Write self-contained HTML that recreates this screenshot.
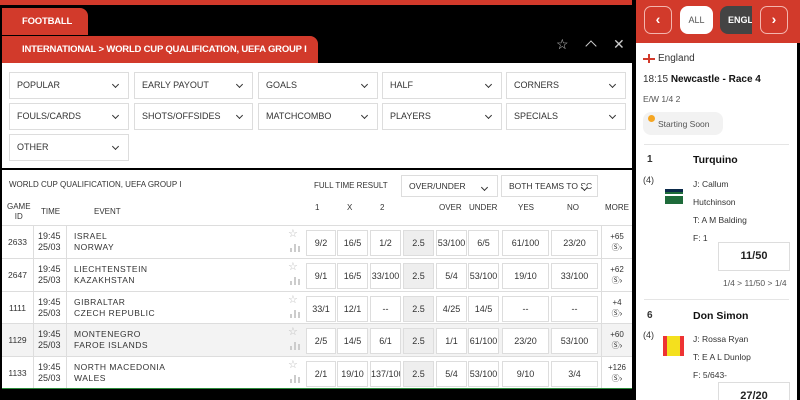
<!DOCTYPE html>
<html style="overflow:hidden;height:400px"><head><style>
*{margin:0;padding:0;box-sizing:border-box}
body{width:800px;height:400px;background:#000;font-family:"Liberation Sans",sans-serif;position:relative;overflow:hidden;color:#222}
.a{position:absolute}
.red{background:#d23a2b}
.tab{color:#fff;font-weight:bold;font-size:9.5px;padding-left:20px;line-height:27px;border-radius:0 8px 0 0;white-space:nowrap;letter-spacing:-0.2px}
.f{position:absolute;border:1px solid #ddd;background:#fff;font-size:9px;color:#333;padding-left:7px;line-height:25px;height:27px;white-space:nowrap;overflow:hidden}
.f:after{content:"";position:absolute;right:10px;top:9px;width:4px;height:4px;border-right:1px solid #333;border-bottom:1px solid #333;transform:rotate(45deg);background:#fff}
.t{font-size:8px;color:#333;position:absolute;white-space:nowrap}
.row{position:absolute;left:2px;width:630px;border-top:1px solid #ddd}
.b{position:absolute;border:1px solid #ddd;background:#fff;font-size:9px;text-align:center;line-height:24px;height:26px;top:4px;color:#333;white-space:nowrap;overflow:hidden}
.g{background:#eee}
.c{position:absolute;font-size:8.5px;color:#333;white-space:nowrap}
.r{font-size:9px;color:#333;position:absolute;white-space:nowrap}
</style></head><body>
<div class="a red" style="left:0;top:0;width:632px;height:5px"></div>
<div class="a red tab" style="left:2px;top:8px;width:86px;height:27px">FOOTBALL</div>
<div class="a red tab" style="left:2px;top:36px;width:316px;height:27px">INTERNATIONAL &gt; WORLD CUP QUALIFICATION, UEFA GROUP I</div>
<div class="a" style="left:556px;top:36px;color:#ccc;font-size:14px">☆</div>
<div class="a" style="left:587px;top:42px;width:8px;height:8px;border-left:1.5px solid #ccc;border-top:1.5px solid #ccc;transform:rotate(45deg)"></div>
<div class="a" style="left:613px;top:36px;color:#ccc;font-size:14px">✕</div>
<div class="a" style="left:2px;top:63px;width:630px;height:105px;background:#fff"></div>
<div class="f" style="left:9px;top:72px;width:120px">POPULAR</div>
<div class="f" style="left:134px;top:72px;width:119px">EARLY PAYOUT</div>
<div class="f" style="left:258px;top:72px;width:120px">GOALS</div>
<div class="f" style="left:382px;top:72px;width:120px">HALF</div>
<div class="f" style="left:506px;top:72px;width:120px">CORNERS</div>
<div class="f" style="left:9px;top:103px;width:120px">FOULS/CARDS</div>
<div class="f" style="left:134px;top:103px;width:119px">SHOTS/OFFSIDES</div>
<div class="f" style="left:258px;top:103px;width:120px">MATCHCOMBO</div>
<div class="f" style="left:382px;top:103px;width:120px">PLAYERS</div>
<div class="f" style="left:506px;top:103px;width:120px">SPECIALS</div>
<div class="f" style="left:9px;top:134px;width:120px">OTHER</div>
<div class="a" style="left:2px;top:170px;width:630px;height:218px;background:#fff"></div>
<div class="a" style="left:2px;top:387px;width:630px;height:2px;background:#2a8a3a"></div>
<div class="t" style="left:9px;top:180px">WORLD CUP QUALIFICATION, UEFA GROUP I</div>
<div class="t" style="left:314px;top:181px">FULL TIME RESULT</div>
<div class="f" style="left:401px;top:175px;width:97px;height:22px;line-height:20px;font-size:8.5px">OVER/UNDER</div>
<div class="f" style="left:501px;top:175px;width:97px;height:22px;line-height:20px;font-size:8.5px">BOTH TEAMS TO SC</div>
<div class="t" style="left:7px;top:202px;text-align:center;line-height:10px">GAME<br>ID</div>
<div class="t" style="left:41px;top:207px">TIME</div>
<div class="t" style="left:94px;top:207px">EVENT</div>
<div class="t" style="left:315px;top:203px">1</div>
<div class="t" style="left:347px;top:203px">X</div>
<div class="t" style="left:380px;top:203px">2</div>
<div class="t" style="left:439px;top:203px">OVER</div>
<div class="t" style="left:469px;top:203px">UNDER</div>
<div class="t" style="left:518px;top:203px">YES</div>
<div class="t" style="left:567px;top:203px">NO</div>
<div class="t" style="left:605px;top:203px">MORE</div>
<div id="rows"></div>
<script>
var d=[["2633","ISRAEL","NORWAY","9/2","16/5","1/2","53/100","6/5","61/100","23/20","+65"],
["2647","LIECHTENSTEIN","KAZAKHSTAN","9/1","16/5","33/100","5/4","53/100","19/10","33/100","+62"],
["1111","GIBRALTAR","CZECH REPUBLIC","33/1","12/1","--","4/25","14/5","--","--","+4"],
["1129","MONTENEGRO","FAROE ISLANDS","2/5","14/5","6/1","1/1","61/100","23/20","53/100","+60"],
["1133","NORTH MACEDONIA","WALES","2/1","19/10","137/100","5/4","53/100","9/10","3/4","+126"]];
var tops=[225,258,291,323,356],h="";
d.forEach(function(r,i){
var bg=i==3?"#f3f3f3":"#fff";
h+='<div class="row" style="top:'+tops[i]+'px;height:'+(i==4?32:33)+'px;background:'+bg+'">'+
'<div class="c" style="left:0;width:31px;text-align:center;top:11px">'+r[0]+'</div>'+
'<div style="position:absolute;left:31px;top:0;bottom:0;border-left:1px solid #ddd"></div>'+
'<div class="c" style="left:36px;top:5px;line-height:11px;font-size:9px">19:45<br>25/03</div>'+
'<div style="position:absolute;left:64px;top:0;bottom:0;border-left:1px solid #ddd"></div>'+
'<div class="c" style="left:72px;top:5px;line-height:11px;letter-spacing:.5px">'+r[1]+'<br>'+r[2]+'</div>'+
'<div class="c" style="left:286px;top:1px;color:#bbb;font-size:11px">☆</div>'+
'<div style="position:absolute;left:288px;top:22px;width:2px;height:4px;background:#ccc"></div><div style="position:absolute;left:292px;top:18px;width:2px;height:8px;background:#ccc"></div><div style="position:absolute;left:296px;top:20px;width:2px;height:6px;background:#ccc"></div>'+
'<div class="b" style="left:304px;width:30px">'+r[3]+'</div>'+
'<div class="b" style="left:335px;width:31px">'+r[4]+'</div>'+
'<div class="b" style="left:368px;width:31px">'+r[5]+'</div>'+
'<div class="b g" style="left:401px;width:31px">2.5</div>'+
'<div class="b" style="left:434px;width:31px">'+r[6]+'</div>'+
'<div class="b" style="left:466px;width:31px">'+r[7]+'</div>'+
'<div class="b" style="left:500px;width:47px">'+r[8]+'</div>'+
'<div class="b" style="left:549px;width:47px">'+r[9]+'</div>'+
'<div style="position:absolute;left:599px;top:0;bottom:0;border-left:1px solid #ddd"></div>'+
'<div class="c" style="left:600px;width:30px;text-align:center;top:5px;font-size:8px;line-height:11px">'+r[10]+'<br>Ⓢ›</div></div>';});
document.getElementById("rows").innerHTML=h;
</script>
<div class="a red" style="left:636px;top:0;width:164px;height:43px"></div>
<div class="a" style="left:644px;top:6px;width:28px;height:28px;border:1.5px solid #f3b5ae;border-radius:7px;color:#fff;text-align:center;line-height:24px;font-size:14px;font-weight:bold">‹</div>
<div class="a" style="left:680px;top:6px;width:33px;height:28px;background:#fff;border-radius:8px;text-align:center;line-height:28px;font-size:9px;color:#555">ALL</div>
<div class="a" style="left:720px;top:6px;width:32px;height:28px;background:#444;border-radius:8px 0 0 8px;overflow:hidden;line-height:28px;font-size:9px;color:#fff;font-weight:bold;padding-left:8px">ENGL</div>
<div class="a" style="left:760px;top:6px;width:28px;height:28px;border:1.5px solid #f3b5ae;border-radius:7px;color:#fff;text-align:center;line-height:24px;font-size:14px;font-weight:bold">›</div>
<div class="a" style="left:636px;top:43px;width:161px;height:357px;background:#fff;overflow:hidden">
<div class="a" style="left:7px;top:11px;width:12px;height:9px;background:#fff"><div class="a" style="left:0;top:3.5px;width:12px;height:2px;background:#d23a2b"></div><div class="a" style="left:5px;top:0;width:2px;height:9px;background:#d23a2b"></div></div>
<div class="r" style="left:22px;top:10px;font-size:10px">England</div>
<div class="r" style="left:7px;top:31px;font-size:10px">18:15 <b style="color:#111">Newcastle - Race 4</b></div>
<div class="r" style="left:7px;top:51px;font-size:8.5px;color:#555">E/W 1/4 2</div>
<div class="a" style="left:7px;top:69px;width:80px;height:23px;background:#f2f2f2;border-radius:8px"></div>
<div class="a" style="left:12px;top:72px;width:7px;height:7px;background:#f5a623;border-radius:50%"></div>
<div class="r" style="left:22px;top:76px;font-size:8.5px;color:#555">Starting Soon</div>
<div class="a" style="left:8px;top:101px;width:145px;border-top:1px solid #e5e5e5"></div>
<div class="r" style="left:11px;top:111px;font-weight:bold;font-size:10px">1</div>
<div class="r" style="left:57px;top:111px;font-weight:bold;font-size:10.5px;color:#111">Turquino</div>
<div class="r" style="left:7px;top:132px;font-size:9px">(4)</div>
<div class="r" style="left:57px;top:132px;font-size:8.5px;line-height:18px">J: Callum<br>Hutchinson<br>T: A M Balding<br>F: 1</div>
<div class="a" style="left:29px;top:146px;width:18px;height:15px;background:#1e6b3a;border-top:3px solid #0b2a4a"></div>
<div class="a" style="left:29px;top:151px;width:18px;height:2px;background:#fff"></div>
<div class="a" style="left:82px;top:199px;width:72px;height:29px;border:1px solid #ddd;text-align:center;line-height:27px;font-weight:bold;font-size:11px">11/50</div>
<div class="r" style="left:87px;top:235px;font-size:8.5px;color:#555">1/4 &gt; 11/50 &gt; 1/4</div>
<div class="a" style="left:8px;top:256px;width:145px;border-top:1px solid #e5e5e5"></div>
<div class="r" style="left:11px;top:267px;font-weight:bold;font-size:10px">6</div>
<div class="r" style="left:57px;top:267px;font-weight:bold;font-size:10.5px;color:#111">Don Simon</div>
<div class="r" style="left:7px;top:287px;font-size:9px">(4)</div>
<div class="r" style="left:57px;top:287px;font-size:8.5px;line-height:18px">J: Rossa Ryan<br>T: E A L Dunlop<br>F: 5/643-</div>
<div class="a" style="left:27px;top:293px;width:21px;height:20px;background:#f4e01e;border-left:4px solid #e33;border-right:4px solid #e33"></div>
<div class="a" style="left:82px;top:339px;width:72px;height:29px;border:1px solid #ddd;text-align:center;line-height:27px;font-weight:bold;font-size:11px">27/20</div>
</div>
</body></html>
